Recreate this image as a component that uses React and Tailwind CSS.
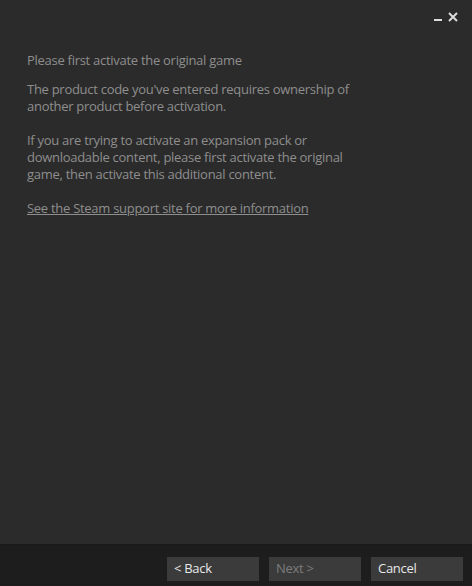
export default function App() {
  return (
    <div
      className="w-[472px] h-[586px] flex flex-col bg-[#2b2b2b] text-[13px] text-[#8e8e8e] tracking-[-0.28px]"
      style={{ fontFamily: '"Open Sans", "Noto Sans", sans-serif' }}
    >
      {/* title bar */}
      <div className="h-[30px] flex items-start justify-end gap-[6px] pr-[14px] pt-[8px]">
        <span className="w-[8px] h-[2px] bg-[#dcdcdc] mt-[11px]" />
        <svg width="10" height="10" viewBox="0 0 10 10" className="mt-[4px]">
          <path d="M1 1 L9 9 M9 1 L1 9" stroke="#dcdcdc" strokeWidth="2" />
        </svg>
      </div>

      {/* body */}
      <div className="flex-1 px-[27px] pt-[22px]">
        <p className="leading-[17px]">Please first activate the original game</p>
        <p className="leading-[17px] mt-[12px] w-[330px]">
          The product code you've entered requires ownership of another product before activation.
        </p>
        <p className="leading-[17px] mt-[17px] w-[330px]">
          If you are trying to activate an expansion pack or downloadable content, please first activate the original
          game, then activate this additional content.
        </p>
        <p className="leading-[17px] mt-[17px]">
          <a className="underline">See the Steam support site for more information</a>
        </p>
      </div>

      {/* footer */}
      <div className="h-[42px] bg-[#1d1d1d] border-t border-[#1a1a1a] flex items-start justify-end gap-[10px] pr-[9px] pt-[12px]">
        <button className="w-[92px] h-[24px] bg-[#3b3b3b] text-[#e8e8e8] text-left pl-[7px]">&lt; Back</button>
        <button className="w-[92px] h-[24px] bg-[#3b3b3b] text-[#7c7c7c] text-left pl-[7px]">Next &gt;</button>
        <button className="w-[92px] h-[24px] bg-[#3b3b3b] text-[#e8e8e8] text-left pl-[7px]">Cancel</button>
      </div>
    </div>
  );
}
